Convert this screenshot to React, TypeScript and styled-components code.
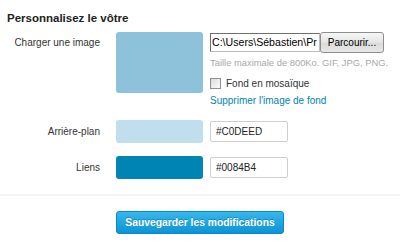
import React from "react";
import styled, { createGlobalStyle } from "styled-components";

const Global = createGlobalStyle`
  html, body { margin: 0; padding: 0; background: #fff; }
  body { font-family: "Liberation Sans", Arial, sans-serif; color: #333; }
`;

const Page = styled.div`
  width: 400px;
  height: 248px;
  overflow: hidden;
  display: flex;
  flex-direction: column;
`;

const Title = styled.h2`
  margin: 11px 0 0 7px;
  font-size: 11.5px;
  line-height: 14px;
  font-weight: bold;
  color: #222;
`;

const Row = styled.div<{ $top: number; $center?: boolean }>`
  display: flex;
  align-items: ${(p) => (p.$center ? "center" : "flex-start")};
  margin-top: ${(p) => p.$top}px;
`;

const Label = styled.div<{ $pad?: number }>`
  width: 100px;
  margin-right: 16px;
  text-align: right;
  font-size: 10px;
  line-height: 12px;
  color: #333;
  padding-top: ${(p) => p.$pad ?? 0}px;
`;

const Swatch = styled.div<{ $color: string; $h: number }>`
  width: 87px;
  height: ${(p) => p.$h}px;
  background: ${(p) => p.$color};
  border-radius: 3px;
  flex-shrink: 0;
`;

const Right = styled.div`
  margin-left: 7px;
  display: flex;
  flex-direction: column;
`;

const FileRow = styled.div`
  display: flex;
  align-items: center;
  height: 21px;
`;

const FileBox = styled.div`
  width: 107px;
  height: 17px;
  border: 1px solid #6f6f6f;
  border-right-color: #bcbcbc;
  border-bottom-color: #bcbcbc;
  overflow: hidden;
  white-space: nowrap;
  font-size: 10.6px;
  line-height: 17px;
  color: #000;
  padding-left: 1px;
  box-sizing: content-box;
`;

const BrowseButton = styled.div`
  width: 62px;
  height: 19px;
  border: 1px solid #8d8d8d;
  border-radius: 3px;
  background: linear-gradient(#f7f7f7, #e4e4e4 50%, #d9d9d9 51%, #e8e8e8);
  font-size: 10px;
  line-height: 19px;
  text-align: center;
  color: #000;
`;

const Hint = styled.div`
  margin-top: 4px;
  font-size: 9.4px;
  line-height: 12px;
  color: #a8a8a8;
  white-space: nowrap;
`;

const CheckRow = styled.label`
  margin-top: 8px;
  display: flex;
  align-items: center;
  height: 13px;
  font-size: 10px;
  color: #333;
`;

const Box = styled.span`
  width: 9px;
  height: 9px;
  border: 1px solid #8f8f8f;
  background: linear-gradient(135deg, #dcdcdc, #fbfbfb);
  margin-right: 5px;
  box-sizing: content-box;
`;

const Link = styled.a`
  margin-top: 5px;
  font-size: 10px;
  line-height: 12px;
  color: #0084b4;
  text-decoration: none;
  white-space: nowrap;
`;

const ColorInput = styled.div`
  width: 71px;
  height: 19px;
  border: 1px solid #cfcfcf;
  border-radius: 2px;
  padding-left: 5px;
  font-size: 10px;
  line-height: 19px;
  color: #222;
`;

const Divider = styled.div`
  margin-top: 15px;
  height: 2px;
  background: #f4f4f4;
`;

const Footer = styled.div`
  margin-top: 15px;
  padding-left: 116px;
`;

const SaveButton = styled.button`
  width: 168px;
  height: 23px;
  border: 1px solid #0a89c6;
  border-radius: 3px;
  background: linear-gradient(#36b7ed, #0c94d5);
  color: #fff;
  font-family: "Liberation Sans", Arial, sans-serif;
  font-weight: bold;
  font-size: 10.3px;
  text-shadow: 0 -1px 0 rgba(0, 0, 0, 0.25);
  padding: 0;
  cursor: pointer;
`;

export default function App() {
  return (
    <Page>
      <Global />
      <Title>Personnalisez le vôtre</Title>
      <Row $top={7}>
        <Label $pad={5}>Charger une image</Label>
        <Swatch $color="#8ec1da" $h={61} />
        <Right>
          <FileRow>
            <FileBox>C:\Users\Sébastien\Pr</FileBox>
            <BrowseButton>Parcourir...</BrowseButton>
          </FileRow>
          <Hint>Taille maximale de 800Ko. GIF, JPG, PNG.</Hint>
          <CheckRow>
            <Box />
            Fond en mosaïque
          </CheckRow>
          <Link href="#">Supprimer l'image de fond</Link>
        </Right>
      </Row>
      <Row $top={13} $center>
        <Label>Arrière-plan</Label>
        <Swatch $color="#c0deed" $h={23} />
        <Right>
          <ColorInput>#C0DEED</ColorInput>
        </Right>
      </Row>
      <Row $top={13} $center>
        <Label>Liens</Label>
        <Swatch $color="#0084b4" $h={23} />
        <Right>
          <ColorInput>#0084B4</ColorInput>
        </Right>
      </Row>
      <Divider />
      <Footer>
        <SaveButton>Sauvegarder les modifications</SaveButton>
      </Footer>
    </Page>
  );
}
